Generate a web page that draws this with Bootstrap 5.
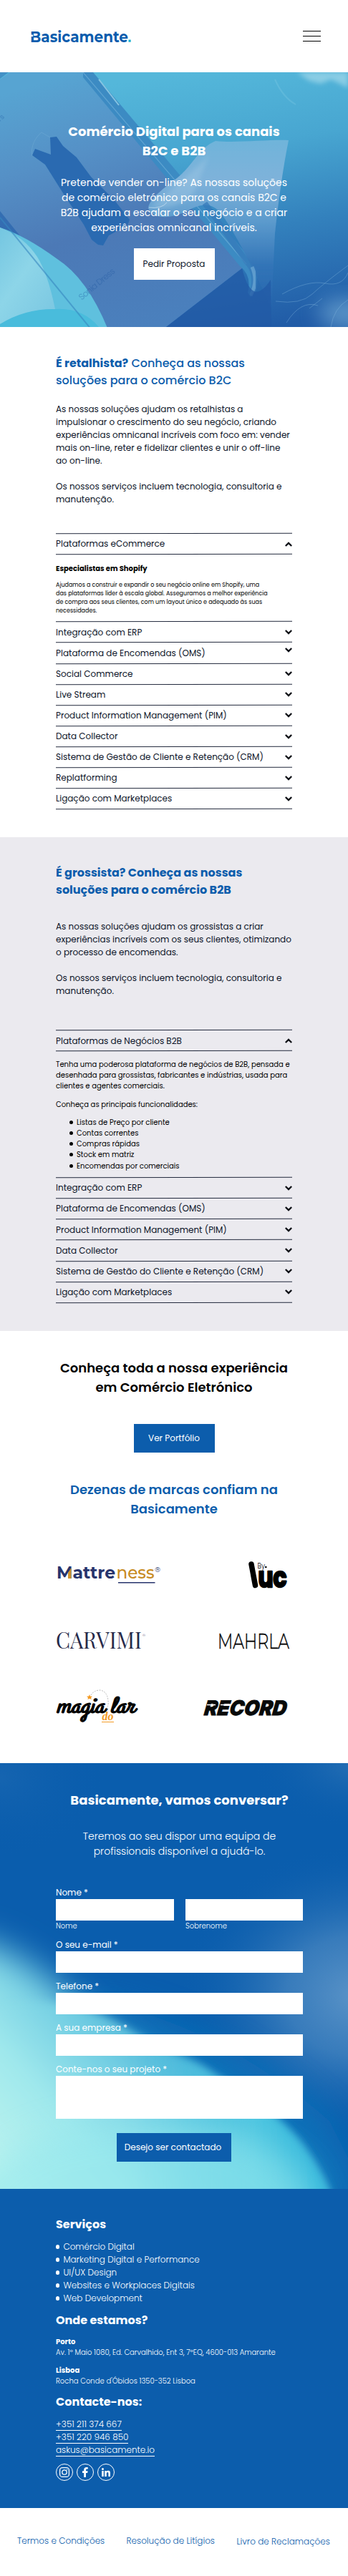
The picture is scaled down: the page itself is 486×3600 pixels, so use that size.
<!DOCTYPE html>
<html lang="pt">
<head>
<meta charset="utf-8">
<meta name="viewport" content="width=device-width, initial-scale=1">
<title>Basicamente</title>
<link href="https://cdn.jsdelivr.net/npm/bootstrap@5.3.0/dist/css/bootstrap.min.css" rel="stylesheet">
<style>
  :root { --brand: #0c5dac; --ink: #0d1529; }
  body { font-family: Poppins, Inter, "Open Sans", sans-serif; font-size: 12px; line-height: 18px; color: var(--ink); background: #fff; overflow-x: hidden; }
  .ln { display: block; width: max-content; white-space: nowrap; }
  .text-center > .ln { margin-left: auto; margin-right: auto; }
  .brand-blue { color: var(--brand); }
  .bg-brand { background: var(--brand); }
  .t18 { font-size: 18px; line-height: 27px; margin: 0; }
  .t16 { font-size: 16px; line-height: 24px; margin: 0; }
  .t14 { font-size: 14px; line-height: 21px; margin: 0; }
  .t12 { font-size: 12px; line-height: 18px; margin: 0; }
  .t10 { font-size: 10px; line-height: 15px; margin: 0; color: #000; }
  .t8 { font-size: 8px; line-height: 12px; margin: 0; color: #000; }
  .w3 { font-weight: 300; } .w4 { font-weight: 400; } .w5 { font-weight: 500; } .w6 { font-weight: 600; } .w7 { font-weight: 700; }
  .column { margin-left: 78px; width: 330px; }
  .site-head { height: 101px; padding: 0 38px 0 43px; }
  .burger { gap: 6px; }
  .burger span { display: block; width: 25px; height: 1px; background: #000; }
  .hero { height: 356px; padding-top: 69px; color: #fff; }
  .scene { position: absolute; inset: 0; width: 100%; height: 100%; }
  .btn-sq { border-radius: 0; border: 0; padding: 0; width: 113px; font-size: 12px; line-height: 18px; display: flex; align-items: center; justify-content: center; }
  .retail { height: 713px; padding-top: 39px; }
  .wholesale { height: 690px; padding-top: 38px; background: #ebeaef; }
  .fold { height: 29.1px; position: relative; display: flex; align-items: center; justify-content: space-between; }
  .fold::before, .fold.last::after { content: ""; position: absolute; left: 0; right: 0; top: -.6px; height: 1.3px; background: #232a3d; transform: rotate(-.12deg); }
  .fold.last::after { top: auto; bottom: -.6px; }
  .chev { width: 10px; height: 7px; fill: none; stroke: #0a0d14; stroke-width: 2.3; }
  .dots { list-style: none; margin: 0; padding: 0; }
  .dots li { display: flex; align-items: center; gap: 5px; }
  .dots li::before { content: ""; width: 5.4px; height: 5.4px; border-radius: 50%; background: currentColor; flex: none; }
  .logos svg { display: block; overflow: visible; }
  .talk { height: 595px; padding: 38px 63px 0 78px; color: #fff; }
  .field { border-radius: 0; border: 0; padding: 0; height: 30px; background: #fff; resize: none; }
  input.field { margin-bottom: 10px; }
  .pair { gap: 16px; height: 55px; }
  .pair .field { margin: 0; }
  .foot { height: 446px; padding: 38px 0 0 78px; color: #fff; }
  .foot .t10 { color: #fff; }
  .foot a { color: #fff; text-decoration: none; border-bottom: 1px solid #fff; height: 18px; }
  .legal { height: 95px; padding: 37px 0 0 24px; }
  .legal a { color: var(--brand); text-decoration: none; }
</style>
</head>
<body>

<header class="site-head d-flex align-items-center justify-content-between">
  <svg width="142" height="24" viewBox="0 0 142 24" aria-label="Basicamente" style="overflow:visible">
    <text x="-1" y="20" font-family="Montserrat, Inter, sans-serif" font-weight="700" font-size="22" textLength="137" lengthAdjust="spacingAndGlyphs" fill="#0a5cad">Basicamente</text>
    <rect x="136.5" y="16.5" width="3.2" height="3.2" fill="#17b1cf"/>
    <rect x="-1" y="9.5" width="4.2" height="2.6" fill="#fff"/>
  </svg>
  <div class="burger d-flex flex-column" role="button" aria-label="Menu"><span></span><span></span><span></span></div>
</header>

<section class="hero position-relative overflow-hidden">
  <svg class="scene" viewBox="0 0 486 356" preserveAspectRatio="none" aria-hidden="true">
    <defs>
      <linearGradient id="sky" x1=".55" y1="0" x2=".75" y2="1"><stop offset="0" stop-color="#54b7da"/><stop offset=".3" stop-color="#48a6d1"/><stop offset=".62" stop-color="#3381bd"/><stop offset="1" stop-color="#215ca7"/></linearGradient>
      <linearGradient id="screen" x1=".3" y1="0" x2=".6" y2="1"><stop offset="0" stop-color="#57a4d2"/><stop offset=".3" stop-color="#5590c6"/><stop offset=".6" stop-color="#4c79b6"/><stop offset="1" stop-color="#4a80bd"/></linearGradient>
      <linearGradient id="thumb" x1=".6" y1="0" x2=".6" y2="1"><stop offset="0" stop-color="#6fb4da"/><stop offset=".25" stop-color="#7fb2da"/><stop offset=".48" stop-color="#5c9bcd"/><stop offset=".75" stop-color="#3274b7"/><stop offset="1" stop-color="#2868b0" stop-opacity=".4"/></linearGradient>
      <linearGradient id="palm" x1="0" y1="0" x2=".8" y2="1"><stop offset="0" stop-color="#74c6e1"/><stop offset=".5" stop-color="#8dd5e8"/><stop offset="1" stop-color="#7cc8e2"/></linearGradient>
      <filter id="soft3"><feGaussianBlur stdDeviation="3"/></filter>
      <filter id="soft1"><feGaussianBlur stdDeviation=".7"/></filter>
      <filter id="soft14" x="-50%" y="-50%" width="200%" height="200%"><feGaussianBlur stdDeviation="14"/></filter>
    </defs>
    <rect width="486" height="356" fill="url(#sky)"/>
    <path d="M415 0H486V22L475 16 462 10 448 16 432 12Z" fill="#a9dcec" opacity=".65" filter="url(#soft3)"/>
    <path d="M0 10 14 0H124L345 262Q350 276 338 274L232 356H0Z" fill="url(#screen)"/>
    <path d="M0 9 12 0H0Z" fill="#4391c6"/>
    <path d="M116 0H130L356 268Q364 285 350 314L346 308Q352 284 335 271L116 7Z" fill="#3c8bc3"/>
    <path d="M116 0 344 268" stroke="#80bce0" stroke-width="1.2" opacity=".5"/>
    <path d="M138 10 166 46" stroke="#a5dbed" stroke-width="2" opacity=".7" filter="url(#soft1)"/>
    <path d="M403 95C375 94 328 99 301 96C277 106 270 130 247 148C227 163 208 178 207 190C212 205 237 205 257 196C281 183 295 180 310 199C331 228 356 280 379 329L384 225Q392 150 403 95Z" fill="url(#thumb)" filter="url(#soft1)"/>
    <path d="M292 116C270 138 250 155 211 188Q240 195 270 170Z" fill="#9ec7e4" opacity=".45" filter="url(#soft3)"/>
    <path d="M208 189Q226 191 233 182" stroke="#c4def0" stroke-width="1" fill="none" opacity=".8"/>
    <path d="M286 183 344 264Q360 280 353 307" stroke="#3679b9" stroke-width="8" fill="none" opacity=".75"/>
    <path d="M352 272Q361 292 350 312" stroke="#7eb5dc" stroke-width="5" fill="none" opacity=".55" filter="url(#soft1)"/>
    <path d="M338 274 232 356H379L378 290Q352 330 338 274Z" fill="#205aa6" opacity=".75" filter="url(#soft1)"/>
    <path d="M45 117C42 104 50 90 58 84L70 91" stroke="#7bb4d8" fill="none" opacity=".35"/>
    <path d="M70 91 79 90 88 103 107 119 127 146 160 179 181 206 178 214 152 228 144 242 137 241 128 234 117 213 90 172 63 129 45 116 49 107 71 115Z" fill="#296bb1" filter="url(#soft1)"/>
    <path d="M0 194 162 395H0Z" fill="#225faa" opacity=".6"/>
    <path d="M0 217Q35 228 80 261Q125 290 155 370H0Z" fill="#5fc0de" filter="url(#soft1)"/>
    <path d="M0 217Q34 230 52 258Q67 282 77 331Q35 334 0 352Z" fill="url(#palm)" filter="url(#soft1)"/>
    <path d="M0 352Q35 330 78 331Q115 329 138 356H0Z" fill="#48bcdc" filter="url(#soft1)"/>
    <path d="M0 203 132 365" stroke="#3787c0" stroke-width="2" opacity=".6"/>
    <text transform="translate(114 319) rotate(-40)" font-size="12" fill="#1d559f" opacity=".35" textLength="62">Sonia Dress</text>
    <text transform="translate(0 69) rotate(-40)" font-size="10" fill="#2968ac" opacity=".5">rs</text>
    <ellipse cx="485" cy="337" rx="40" ry="20" fill="#82bade" opacity=".6" filter="url(#soft14)"/>
    <g fill="none" stroke="#8bbfe1" opacity=".35"><path d="M385 320Q420 325 436 310T486 270M394 310Q430 290 454 295T486 280M400 350Q420 318 444 326M432 330 450 316M462 356Q466 330 486 318"/></g>
    <path d="M384 10Q395 35 413 45" stroke="#8dd2e9" stroke-width="2" opacity=".25" fill="none" filter="url(#soft1)"/>
  </svg>
  <div class="position-relative">
    <h1 class="t18 w7 text-center"><span class="ln">Comércio Digital para os canais</span><span class="ln">B2C e B2B</span></h1>
    <p class="t14 w4 text-center" style="padding-top:20.5px"><span class="ln">Pretende vender on-line? As nossas soluções</span><span class="ln">de comércio eletrónico para os canais B2C e</span><span class="ln">B2B ajudam a escalar o seu negócio e a criar</span><span class="ln">experiências omnicanal incríveis.</span></p>
    <a class="btn-sq bg-white mx-auto text-decoration-none" href="#" style="height:44px;margin-top:18.5px;color:var(--ink)">Pedir Proposta</a>
  </div>
</section>

<section class="retail">
  <div class="column">
    <h2 class="t16 w5 brand-blue"><span class="ln"><b class="w7">É retalhista?</b> Conheça as nossas</span><span class="ln">soluções para o comércio B2C</span></h2>
    <p class="t12" style="padding-top:19px"><span class="ln">As nossas soluções ajudam os retalhistas a</span><span class="ln">impulsionar o crescimento do seu negócio, criando</span><span class="ln">experiências omnicanal incríveis com foco em: vender</span><span class="ln">mais on-line, reter e fidelizar clientes e unir o off-line</span><span class="ln">ao on-line.</span></p>
    <p class="t12" style="padding:18px 0 38.5px"><span class="ln">Os nossos serviços incluem tecnologia, consultoria e</span><span class="ln">manutenção.</span></p>
    <div class="fold last"><span>Plataformas eCommerce</span><svg class="chev" viewBox="0 0 10 7"><path d="M.8 6 5 1.9 9.2 6"/></svg></div>
    <h3 class="t10 w7" style="padding-top:12px"><span class="ln">Especialistas em Shopify</span></h3>
    <p class="t8" style="padding:10px 0 9.4px"><span class="ln">Ajudamos a construir e expandir o seu negócio online em Shopify, uma</span><span class="ln">das plataformas líder à escala global. Asseguramos a melhor experiência</span><span class="ln">de compra aos seus clientes, com um layout único e adequado às suas</span><span class="ln">necessidades.</span></p>
    <div class="fold"><span>Integração com ERP</span><svg class="chev" viewBox="0 0 10 7"><path d="M.8 1 5 5.1 9.2 1"/></svg></div>
    <div class="fold"><span>Plataforma de Encomendas (OMS)</span><svg class="chev mb-2" viewBox="0 0 10 7"><path d="M.8 1 5 5.1 9.2 1"/></svg></div>
    <div class="fold"><span>Social Commerce</span><svg class="chev" viewBox="0 0 10 7"><path d="M.8 1 5 5.1 9.2 1"/></svg></div>
    <div class="fold"><span>Live Stream</span><svg class="chev" viewBox="0 0 10 7"><path d="M.8 1 5 5.1 9.2 1"/></svg></div>
    <div class="fold"><span>Product Information Management (PIM)</span><svg class="chev" viewBox="0 0 10 7"><path d="M.8 1 5 5.1 9.2 1"/></svg></div>
    <div class="fold"><span>Data Collector</span><svg class="chev" viewBox="0 0 10 7"><path d="M.8 1 5 5.1 9.2 1"/></svg></div>
    <div class="fold"><span>Sistema de Gestão de Cliente e Retenção (CRM)</span><svg class="chev" viewBox="0 0 10 7"><path d="M.8 1 5 5.1 9.2 1"/></svg></div>
    <div class="fold"><span>Replatforming</span><svg class="chev" viewBox="0 0 10 7"><path d="M.8 1 5 5.1 9.2 1"/></svg></div>
    <div class="fold last"><span>Ligação com Marketplaces</span><svg class="chev" viewBox="0 0 10 7"><path d="M.8 1 5 5.1 9.2 1"/></svg></div>
  </div>
</section>

<section class="wholesale">
  <div class="column">
    <h2 class="t16 w7 brand-blue"><span class="ln">É grossista? Conheça as nossas</span><span class="ln">soluções para o comércio B2B</span></h2>
    <p class="t12" style="padding-top:30px"><span class="ln">As nossas soluções ajudam os grossistas a criar</span><span class="ln">experiências incríveis com os seus clientes, otimizando</span><span class="ln">o processo de encomendas.</span></p>
    <p class="t12" style="padding:18px 0 46px"><span class="ln">Os nossos serviços incluem tecnologia, consultoria e</span><span class="ln">manutenção.</span></p>
    <div class="fold last"><span>Plataformas de Negócios B2B</span><svg class="chev" viewBox="0 0 10 7"><path d="M.8 6 5 1.9 9.2 6"/></svg></div>
    <p class="t10" style="padding-top:11.4px"><span class="ln">Tenha uma poderosa plataforma de negócios de B2B, pensada e</span><span class="ln">desenhada para grossistas, fabricantes e indústrias, usada para</span><span class="ln">clientes e agentes comerciais.</span></p>
    <p class="t10" style="padding-top:11px"><span class="ln">Conheça as principais funcionalidades:</span></p>
    <ul class="dots t10" style="padding:9.5px 0 9px 18.6px">
      <li>Listas de Preço por cliente</li>
      <li>Contas correntes</li>
      <li>Compras rápidas</li>
      <li>Stock em matriz</li>
      <li style="padding-top:.8px">Encomendas por comerciais</li>
    </ul>
    <div class="fold"><span>Integração com ERP</span><svg class="chev" viewBox="0 0 10 7"><path d="M.8 1 5 5.1 9.2 1"/></svg></div>
    <div class="fold"><span>Plataforma de Encomendas (OMS)</span><svg class="chev" viewBox="0 0 10 7"><path d="M.8 1 5 5.1 9.2 1"/></svg></div>
    <div class="fold"><span>Product Information Management (PIM)</span><svg class="chev" viewBox="0 0 10 7"><path d="M.8 1 5 5.1 9.2 1"/></svg></div>
    <div class="fold"><span>Data Collector</span><svg class="chev" viewBox="0 0 10 7"><path d="M.8 1 5 5.1 9.2 1"/></svg></div>
    <div class="fold"><span>Sistema de Gestão do Cliente e Retenção (CRM)</span><svg class="chev" viewBox="0 0 10 7"><path d="M.8 1 5 5.1 9.2 1"/></svg></div>
    <div class="fold last"><span>Ligação com Marketplaces</span><svg class="chev" viewBox="0 0 10 7"><path d="M.8 1 5 5.1 9.2 1"/></svg></div>
  </div>
</section>

<section style="height:604px;padding-top:38px">
  <h2 class="t18 w6 text-center text-black"><span class="ln">Conheça toda a nossa experiência</span><span class="ln">em Comércio Eletrónico</span></h2>
  <a class="btn-sq bg-brand text-white mx-auto text-decoration-none" href="#" style="height:40px;margin-top:38px">Ver Portfólio</a>
  <h2 class="t18 w6 text-center brand-blue" style="padding-top:38px"><span class="ln">Dezenas de marcas confiam na</span><span class="ln">Basicamente</span></h2>
  <div class="logos column d-flex flex-column" style="padding-top:60px">
    <div class="d-flex justify-content-between" style="height:100px">
      <svg width="146" height="38" viewBox="0 0 146 38" font-family="Montserrat, Inter, sans-serif">
        <text x="1" y="24.3" font-size="23.5" font-weight="700" fill="#27346c" textLength="82" lengthAdjust="spacingAndGlyphs">Mattre</text>
        <text x="84.5" y="24.3" font-size="23.5" font-weight="500" fill="#c78a21" textLength="53" lengthAdjust="spacingAndGlyphs">ness</text>
        <path d="M17 24V16L21.500 9V24Z" fill="#d1922a"/>
        <path d="M87 29.700H138.500" stroke="#27346c" stroke-width="1.600"/>
        <text x="138" y="15" font-size="10" fill="#27346c">®</text>
      </svg>
      <svg width="62" height="38" viewBox="0 0 62 38" font-family="Poppins, Inter, sans-serif">
        <text x="14.500" y="35.500" font-size="38" font-weight="700" stroke="#000" stroke-width="2.600" stroke-linejoin="round" textLength="40" lengthAdjust="spacingAndGlyphs">uc</text>
        <path d="M5 4 10.500 33.500" stroke="#000" stroke-width="7.500" stroke-linecap="round"/>
        <text x="13.500" y="9.500" font-size="11" font-weight="300" textLength="10.500" lengthAdjust="spacingAndGlyphs">By</text>
        <circle cx="25.300" cy="8" r="1.300"/>
      </svg>
    </div>
    <div class="d-flex justify-content-between" style="height:79px">
      <svg width="128" height="24" viewBox="0 0 128 24" font-family="'Playfair Display', 'Liberation Serif', serif" fill="#272a4a">
        <text x="0" y="22" font-size="31" textLength="120" lengthAdjust="spacingAndGlyphs">CARVIMI</text>
        <text x="121" y="5.500" font-size="6">®</text>
      </svg>
      <svg width="103" height="24" viewBox="0 0 103 24"><text x="-1" y="22" font-family="Montserrat, Lato, sans-serif" font-size="30" font-weight="300" stroke="#000" stroke-width=".4" textLength="100" lengthAdjust="spacingAndGlyphs">MAHRLA</text></svg>
    </div>
    <div class="d-flex justify-content-between">
      <svg width="112" height="50" viewBox="0 0 112 50">
        <g font-family="'Grand Hotel', Pacifico, Lobster, 'Dancing Script', 'Liberation Serif', serif" font-style="italic" font-weight="700" font-size="32" fill="#050505"><text x="0" y="32" textLength="67" lengthAdjust="spacingAndGlyphs">magia</text><text x="75" y="32" textLength="34" lengthAdjust="spacingAndGlyphs">lar</text></g>
        <path d="M49 8Q53 1 62 1Q72 3 73 16Q74 23 70 29" fill="none" stroke="#b9b9b9" stroke-width="1" stroke-dasharray="2 1.500"/>
        <path d="M47 7 48 9.500 51 9.700 49 11.500 49.800 14 47 12.700 44.500 14 45 11.500 43 9.700 46 9.500Z" fill="#f39a23"/>
        <text x="64.500" y="43" font-family="'Liberation Serif', serif" font-style="italic" font-weight="700" font-size="16" fill="#f39a23">do</text>
        <path d="M64 45.500H81" stroke="#f39a23"/>
      </svg>
      <svg width="124" height="50" viewBox="0 0 124 50"><text x="0" y="36" transform="translate(5 0) skewX(-7)" font-family="Inter, sans-serif" font-style="italic" font-weight="900" font-size="28.500" fill="#080a0a" stroke="#080a0a" stroke-width=".8" textLength="115" lengthAdjust="spacingAndGlyphs">RECORD</text><path d="M5 21.500H17M24 21.500H36" stroke="#fff" stroke-width="1.500"/></svg>
    </div>
  </div>
</section>

<section class="talk position-relative overflow-hidden">
  <svg class="scene" viewBox="0 0 486 595" preserveAspectRatio="none" aria-hidden="true">
    <defs>
      <linearGradient id="aqua" gradientUnits="userSpaceOnUse" x1="0" y1="560" x2="270" y2="320"><stop offset="0" stop-color="#bbf3ee"/><stop offset=".3" stop-color="#9fe8ec"/><stop offset=".6" stop-color="#6fcce2"/><stop offset="1" stop-color="#2596cc"/></linearGradient>
      <linearGradient id="deep" gradientUnits="userSpaceOnUse" x1="180" y1="0" x2="470" y2="0"><stop offset="0" stop-color="#4fcbe3" stop-opacity="0"/><stop offset=".6" stop-color="#4fcbe3" stop-opacity=".8"/><stop offset="1" stop-color="#27b1d9"/></linearGradient>
      <radialGradient id="mist"><stop offset="0" stop-color="#5b94c8"/><stop offset=".4" stop-color="#4383bf" stop-opacity=".8"/><stop offset="1" stop-color="#0b5dad" stop-opacity="0"/></radialGradient>
      <radialGradient id="corner"><stop offset="0" stop-color="#2a72b6" stop-opacity=".9"/><stop offset="1" stop-color="#0b5dad" stop-opacity="0"/></radialGradient>
      <filter id="edge6" filterUnits="userSpaceOnUse" x="-80" y="100" width="650" height="600"><feGaussianBlur stdDeviation="6"/></filter>
      <filter id="edge22" filterUnits="userSpaceOnUse" x="-120" y="100" width="700" height="600"><feGaussianBlur stdDeviation="24"/></filter>
    </defs>
    <rect width="486" height="595" fill="#0a5dad"/>
    <ellipse cx="500" cy="0" rx="150" ry="90" fill="url(#corner)"/>
    <ellipse cx="0" cy="20" rx="150" ry="110" fill="url(#corner)" opacity=".4"/>
    <ellipse cx="500" cy="325" rx="250" ry="210" fill="url(#mist)"/>
    <path d="M120 330Q300 360 460 500L520 620H380L120 420Z" fill="#0a76bb" opacity=".8" filter="url(#edge22)"/>
    <path d="M-90 240Q10 240 100 330T300 480L400 700H-90Z" fill="url(#aqua)" filter="url(#edge22)"/>
    <path d="M-40 360C40 320 120 335 180 372C230 402 268 410 300 436C345 462 385 490 415 525Q440 555 460 600V640H-40Z" fill="url(#aqua)" filter="url(#edge6)"/>
    <path d="M150 400C230 402 268 410 300 436C345 462 385 490 415 525Q440 555 460 600V640H150Z" fill="url(#deep)" filter="url(#edge6)"/>
    <ellipse cx="200" cy="620" rx="240" ry="120" fill="#94e8ee" opacity=".6" filter="url(#edge22)"/>
  </svg>
  <form class="position-relative">
    <h2 class="t18 w7 text-center"><span class="ln">Basicamente, vamos conversar?</span></h2>
    <p class="t14 w3 text-center" style="padding:26.5px 0 38.5px"><span class="ln">Teremos ao seu dispor uma equipa de</span><span class="ln">profissionais disponível a ajudá-lo.</span></p>
    <label class="ln">Nome *</label>
    <div class="pair d-flex">
      <div style="width:165px"><input class="field d-block w-100" aria-label="Nome"><span class="ln t10 w3 text-white">Nome</span></div>
      <div style="width:164px"><input class="field d-block w-100" aria-label="Sobrenome"><span class="ln t10 w3 text-white">Sobrenome</span></div>
    </div>
    <label class="ln">O seu e-mail *</label>
    <input class="field d-block w-100" aria-label="O seu e-mail">
    <label class="ln">Telefone *</label>
    <input class="field d-block w-100" aria-label="Telefone">
    <label class="ln">A sua empresa *</label>
    <input class="field d-block w-100" aria-label="A sua empresa">
    <label class="ln">Conte-nos o seu projeto *</label>
    <textarea class="field d-block w-100" aria-label="Projeto" style="height:60px"></textarea>
    <button class="btn-sq bg-brand text-white" type="button" style="width:160px;height:40px;margin:20px 0 0 85px;padding-right:3px">Desejo ser contactado</button>
  </form>
</section>

<footer class="foot bg-brand">
  <h3 class="t16 w7">Serviços</h3>
  <ul class="dots t12 w3" style="padding:10px 0">
    <li>Comércio Digital</li>
    <li>Marketing Digital e Performance</li>
    <li>UI/UX Design</li>
    <li>Websites e Workplaces Digitais</li>
    <li>Web Development</li>
  </ul>
  <h3 class="t16 w7">Onde estamos?</h3>
  <p class="t10 w3" style="padding-top:10px"><b class="ln w7">Porto</b><span class="ln">Av. 1º Maio 1080, Ed. Carvalhido, Ent 3, 7ºEQ, 4600-013 Amarante</span></p>
  <p class="t10 w3" style="padding:10px 0"><b class="ln w7">Lisboa</b><span class="ln">Rocha Conde d'Óbidos 1350-352 Lisboa</span></p>
  <h3 class="t16 w7">Contacte-nos:</h3>
  <div class="w3" style="padding:10px 0"><a class="ln" href="#">+351 211 374 667</a><a class="ln" href="#">+351 220 946 850</a><a class="ln" href="#">askus@basicamente.io</a></div>
  <div class="d-flex" style="gap:5px">
    <svg width="24" height="24" viewBox="0 0 24 24" fill="none" stroke="#fff"><circle cx="12" cy="12" r="11.500"/><rect x="5.600" y="5.600" width="12.800" height="12.800" rx="3.500" stroke-width="1.300"/><circle cx="12" cy="12" r="3.200" stroke-width="1.300"/><circle cx="15.700" cy="8.300" r=".4"/></svg>
    <svg width="24" height="24" viewBox="0 0 24 24"><circle cx="12" cy="12" r="11.500" fill="none" stroke="#fff"/><path d="M10.200 19V12.900H8V10.300H10.200V8.600C10.200 6.300 11.500 5 13.800 5C14.600 5 15.800 5.200 15.800 5.200V7.500H14.600C13.400 7.500 13 8.200 13 9V10.300H15.600L15.200 12.900H13V19Z" fill="#fff"/></svg>
    <svg width="24" height="24" viewBox="0 0 24 24"><circle cx="12" cy="12" r="11.500" fill="none" stroke="#fff"/><path d="M6.200 10H8.800V18H6.200ZM10.200 10H12.700V11.100C13.200 10.300 14 9.800 15.200 9.800C17.600 9.800 18 11.400 18 13.500V18H15.400V14.100C15.400 13.100 15.400 12 14.200 12S12.800 13 12.800 14V18H10.200Z" fill="#fff"/><circle cx="7.500" cy="7.500" r="1.500" fill="#fff"/></svg>
  </div>
</footer>

<nav class="legal w3 d-flex"><a href="#" style="width:152.5px">Termos e Condições</a><a href="#" style="width:154px">Resolução de Litígios</a><a href="#" style="margin-top:1px">Livro de Reclamações</a></nav>

<script src="https://cdn.jsdelivr.net/npm/bootstrap@5.3.0/dist/js/bootstrap.bundle.min.js"></script>
</body>
</html>
